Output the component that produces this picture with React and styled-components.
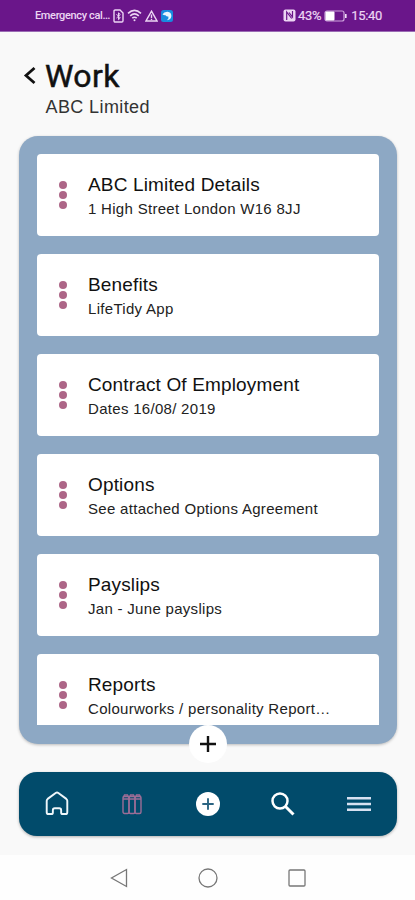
import React from "react";
import styled, { createGlobalStyle } from "styled-components";

const items = [
  { title: "ABC Limited Details", text: "1 High Street London W16 8JJ" },
  { title: "Benefits", text: "LifeTidy App" },
  { title: "Contract Of Employment", text: "Dates 16/08/ 2019" },
  { title: "Options", text: "See attached Options Agreement" },
  { title: "Payslips", text: "Jan - June payslips" },
  { title: "Reports", text: "Colourworks / personality Report…" },
];

const StatusBar = () => (
  <StatusWrapper>
    <StatusLeft>
      <Carrier>Emergency cal…</Carrier>
      <svg width="11" height="14" viewBox="0 0 11 14" fill="none" stroke="#ecd5f3" strokeWidth="1.4">
        <path d="M1 2.2Q1 1 2.2 1H7L10 4v7.8Q10 13 8.8 13H2.2Q1 13 1 11.8Z" />
        <path d="M3.5 5.2L7.3 9 5.5 10.7V3.8L7.3 5.500 3.5 9" strokeWidth="1" />
      </svg>
      <svg width="15" height="13" viewBox="0 0 15 13" fill="none" stroke="#ecd5f3" strokeWidth="1.6">
        <path d="M1 4.3Q7.5-1.5 14 4.3M3.2 6.8Q7.5 3 11.8 6.8M5.3 9.2Q7.5 7.3 9.7 9.2" />
        <circle cx="7.5" cy="11.2" r="1" fill="#ecd5f3" stroke="none" />
      </svg>
      <svg width="13" height="12" viewBox="0 0 13 12" fill="none" stroke="#ecd5f3" strokeWidth="1.4">
        <path d="M6.5 1.2L12 11H1Z" />
        <path d="M6.5 4.5V8M6.5 8.7V10" />
      </svg>
      <svg width="12" height="12" viewBox="0 0 12 12">
        <rect width="12" height="12" rx="2.5" fill="#188bdf" />
        <path d="M1.500 4.500Q3 1.500 6.500 1.700Q10.500 2.300 10.400 6Q10 9.800 6 10.300Q8.300 8.300 7.300 6.500Q5.800 7 4.500 5.300Q3 5.500 1.500 4.500Z" fill="#e6f5ff" />
      </svg>
    </StatusLeft>
    <StatusRight>
      <svg width="13" height="13" viewBox="0 0 13 13">
        <rect x="0.5" y="0.5" width="12" height="12" rx="2" fill="#ecd5f3" />
        <path d="M3.700 11V3L8.700 9.500M6 3.500L9.500 8V2" fill="none" stroke="#6a168a" strokeWidth="1.2" />
      </svg>
      <StatusText>43%</StatusText>
      <Battery width="23" height="12" viewBox="0 0 23 12">
        <rect x="1" y="1" width="19" height="10" rx="2" fill="none" stroke="#cda3dc" strokeWidth="1.2" />
        <rect x="1.5" y="1.5" width="9" height="9" rx="1" fill="#fff" />
        <path d="M21.8 4V8" stroke="#f3e2f8" strokeWidth="1.6" />
      </Battery>
      <StatusText>15:40</StatusText>
    </StatusRight>
  </StatusWrapper>
);

const ItemCard = ({ title, text }) => (
  <Card>
    <Dots>
      <span />
      <span />
      <span />
    </Dots>
    <CardInfo>
      <h3>{title}</h3>
      <p>{text}</p>
    </CardInfo>
  </Card>
);

const BottomNav = () => (
  <NavWrapper>
    <NavButton aria-label="Home">
      <svg width="24" height="25" viewBox="0 0 24 26" fill="none" stroke="#eef6fa" strokeWidth="2" strokeLinejoin="round">
        <path d="M1.300 10.200Q1.300 9 2.300 8.200L10.600 2Q12 1 13.400 2L21.700 8.200Q22.700 9 22.700 10.200V22Q22.700 24 20.700 24H18Q16.300 24 16.300 22.300V20Q16.300 18 14.300 18H9.700Q7.700 18 7.700 20V22.300Q7.700 24 6 24H3.300Q1.300 24 1.300 22Z" />
      </svg>
    </NavButton>
    <NavButton aria-label="Library">
      <svg width="20" height="22" viewBox="0 0 20 22" fill="none" stroke="#9c6d96" strokeWidth="1.4">
        <path d="M1 4.500L2.500 2H5.500L7 4.500L8.500 2H11.500L13 4.500L14.500 2H17.500L19 4.500M1 6H19" />
        <rect x="1" y="3.5" width="6" height="17" rx="1.5" />
        <rect x="7" y="3.5" width="6" height="17" rx="1.5" />
        <rect x="13" y="3.5" width="6" height="17" rx="1.5" />
      </svg>
    </NavButton>
    <NavButton aria-label="Add">
      <svg width="24" height="24" viewBox="0 0 24 24">
        <circle cx="12" cy="12" r="12" fill="#fff" />
        <path d="M12 6.3V17.7M6.3 12H17.7" stroke="#2b6482" strokeWidth="1.9" />
      </svg>
    </NavButton>
    <NavButton aria-label="Search">
      <svg width="24" height="24" viewBox="0 0 24 24" fill="none" stroke="#fff">
        <circle cx="9" cy="9" r="7.5" strokeWidth="2.5" />
        <path d="M14.500 14.500L22.500 22.500" strokeWidth="3" />
      </svg>
    </NavButton>
    <NavButton aria-label="Menu">
      <svg width="24" height="16" viewBox="0 0 24 16" stroke="#d7e1f1" strokeWidth="2.5">
        <path d="M0 2.2H24M0 8H24M0 13.8H24" />
      </svg>
    </NavButton>
  </NavWrapper>
);

const App = () => {
  return (
    <Screen>
      <GlobalStyle />
      <StatusBar />
      <Header>
        <TitleRow>
          <svg width="14" height="20" viewBox="0 0 14 20" fill="none" stroke="#111" strokeWidth="2.8">
            <path d="M12.500 2L4 9.500L12.500 17" />
          </svg>
          <Title>Work</Title>
        </TitleRow>
        <Subtitle>ABC Limited</Subtitle>
      </Header>
      <Panel>
        <List>
          {items.map((item) => (
            <ItemCard key={item.title} {...item} />
          ))}
        </List>
        <AddButton aria-label="Add item">
          <svg width="18" height="18" viewBox="0 0 18 18" stroke="#111" strokeWidth="2.4">
            <path d="M9 1V17M1 9H17" />
          </svg>
        </AddButton>
      </Panel>
      <BottomNav />
      <SystemNav>
        <svg width="18" height="20" viewBox="0 0 18 20">
          <path d="M16.500 1.500V18.500L1.500 10Z" />
        </svg>
        <svg width="20" height="20" viewBox="0 0 20 20">
          <circle cx="10" cy="10" r="9" />
        </svg>
        <svg width="18" height="18" viewBox="0 0 18 18">
          <rect x="1" y="1" width="16" height="16" rx="1" />
        </svg>
      </SystemNav>
    </Screen>
  );
};

export default App;

const GlobalStyle = createGlobalStyle`
  * {
    box-sizing: border-box;
  }
  body {
    margin: 0;
    background-color: #f9f9f9;
    font-family: "Liberation Sans", Arial, sans-serif;
  }
  h1, h3, p {
    margin: 0;
    font-weight: 400;
  }
  svg {
    display: block;
    flex-shrink: 0;
  }
`;

const Screen = styled.div`
  width: 415px;
  height: 900px;
  display: flex;
  flex-direction: column;
  overflow: hidden;
  background-color: #f9f9f9;
`;

const StatusWrapper = styled.div`
  height: 32px;
  flex-shrink: 0;
  padding: 0 33px 0 35px;
  display: flex;
  align-items: center;
  justify-content: space-between;
  background-color: #6a168a;
  border-bottom: 1px solid #9a6cb4;
  color: #ecd5f3;
  font-family: Roboto, sans-serif;
`;

const StatusLeft = styled.div`
  display: flex;
  align-items: center;
  gap: 3px;
`;

const Carrier = styled.span`
  width: 75px;
  font-size: 11px;
  font-weight: 500;
  letter-spacing: -0.35px;
  white-space: nowrap;
`;

const StatusRight = styled.div`
  display: flex;
  align-items: center;
  gap: 2px;
`;

const StatusText = styled.span`
  font-size: 13px;
  letter-spacing: -0.3px;
  -webkit-text-stroke: 0.2px #ecd5f3;
`;

const Battery = styled.svg`
  margin: 0 2px 0 1px;
`;

const Header = styled.header`
  height: 104px;
  flex-shrink: 0;
  padding: 23.5px 22px 0;
`;

const TitleRow = styled.div`
  height: 40px;
  display: flex;
  align-items: center;
  gap: 9px;
`;

const Title = styled.h1`
  color: #111;
  font-family: Roboto, sans-serif;
  font-size: 32px;
  font-weight: 400;
  line-height: 40px;
  letter-spacing: 0.4px;
  -webkit-text-stroke: 0.5px #111;
`;

const Subtitle = styled.p`
  padding-left: 23.5px;
  color: #333;
  font-size: 18px;
  line-height: 22px;
  letter-spacing: 0.4px;
`;

const Panel = styled.main`
  position: relative;
  height: 607.5px;
  flex-shrink: 0;
  margin: 0 18.500px 0 19px;
  padding: 18px 18px 18.500px;
  border-radius: 19px;
  background-color: #8da8c4;
  box-shadow: 0 1px 3px rgba(0, 0, 0, 0.25);
`;

const List = styled.div`
  height: 571px;
  display: flex;
  flex-direction: column;
  gap: 18px;
  overflow: hidden;
`;

const Card = styled.div`
  height: 82px;
  flex-shrink: 0;
  display: flex;
  padding-left: 21.5px;
  border-radius: 4px;
  background-color: #fff;
`;

const Dots = styled.div`
  width: 29.5px;
  padding-top: 27px;
  display: flex;
  flex-direction: column;
  gap: 2px;
  span {
    width: 8px;
    height: 8px;
    border-radius: 50%;
    background-color: #ad6687;
  }
`;

const CardInfo = styled.div`
  padding-top: 19px;
  white-space: nowrap;
  h3 {
    color: #111;
    font-size: 19px;
    line-height: 24px;
    letter-spacing: 0.15px;
  }
  p {
    margin-top: 2px;
    color: #222;
    font-size: 15px;
    line-height: 20px;
    letter-spacing: 0.3px;
  }
`;

const Button = styled.button`
  padding: 0;
  border: none;
  background: none;
  display: flex;
  align-items: center;
  justify-content: center;
`;

const AddButton = styled(Button)`
  position: absolute;
  left: 50%;
  bottom: -19px;
  width: 38px;
  height: 38px;
  border-radius: 50%;
  background-color: #fff;
  transform: translateX(-50%);
`;

const NavWrapper = styled.nav`
  height: 64px;
  flex-shrink: 0;
  margin: 28px 18.500px 0 19px;
  display: flex;
  align-items: center;
  border-radius: 18px;
  background-color: #014b6b;
  box-shadow: 0 1px 3px rgba(0, 0, 0, 0.3);
`;

const NavButton = styled(Button)`
  flex: 1;
  height: 100%;
`;

const SystemNav = styled.div`
  height: 45px;
  margin-top: auto;
  display: flex;
  align-items: center;
  justify-content: center;
  gap: 70px;
  background-color: #fefefe;
  svg {
    fill: none;
    stroke: #777;
    stroke-width: 1.3;
  }
`;
